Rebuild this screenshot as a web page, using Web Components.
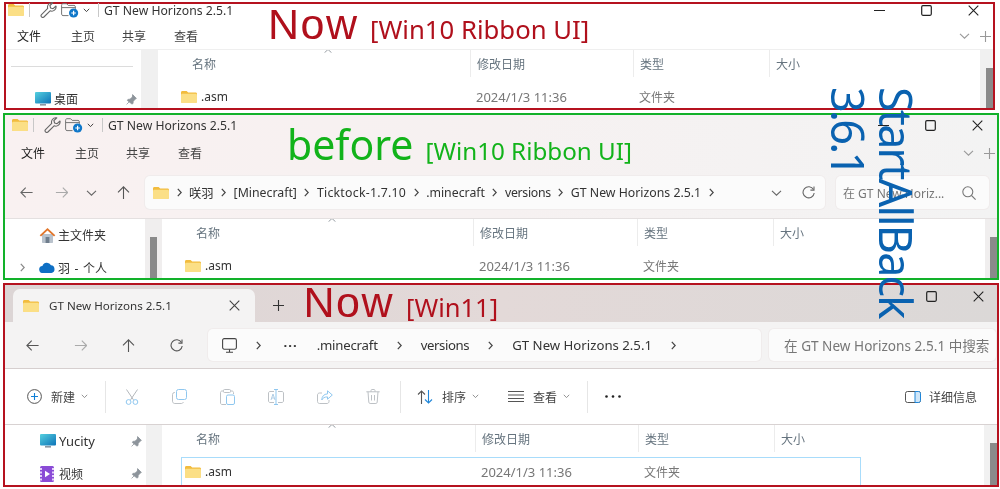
<!DOCTYPE html>
<html lang="zh">
<head>
<meta charset="utf-8">
<title>GT New Horizons 2.5.1</title>
<style>
  html, body { margin: 0; background: #fff; }
  body {
    width: 1000px; height: 489px; overflow: hidden; position: relative;
    font: 12px "Noto Sans", "Noto Sans CJK SC", sans-serif; color: #333;
    filter: blur(.3px);
  }
</style>
</head>
<body>

<win-frame color="#b5121f" style="margin:2px 0 0 4px;width:991px;height:108px">
  <title-bar style="--h:12px;--qa-left:2px"></title-bar>
  <ribbon-tabs style="--pt:7px;--h:26px;--left:11px;--after:0px;--rule:#efefef"></ribbon-tabs>
  <file-pane side="152" cols="312px 163px 136px 91px" thumb="18" track="13" style="--band:17px;--line:#f0f0f0">
    <nav-rule slot="side"></nav-rule>
    <nav-item slot="side" icon="desktop" pin style="--pad:29px">桌面</nav-item>
    <list-row name=".asm" date="2024/1/3 11:36" type="文件夹"></list-row>
  </file-pane>
  <note-label color="#b0101c" style="left:262px;top:-1.4px;--big:43px;--big-font:'Liberation Sans';--big-ls:1.5px;--small:25.7px;--gap:11.5px" big="Now" small="[Win10 Ribbon UI]"></note-label>
</win-frame>

<win-frame color="#12b12a" style="margin:3px 0 0 3px;width:996px;height:167px;--bg:linear-gradient(90deg,#f9f1f1,#f6f1f1 50%,#f3f3f3)">
  <title-bar style="--h:20px;--qa-left:7px"></title-bar>
  <ribbon-tabs style="--pt:4px;--h:28px;--left:16px;--after:4px"></ribbon-tabs>
  <addr-row cols="35px 31px 31px 28px" style="--left:15px;--pt:4px;--pb:9px;--box-h:33px;--seg:7.5px;--search-w:153px;--box-gap:11px;--right:8px;--fs:12.3px;--box-pad:8px;--search-right:13px">
    <win-icon slot="nav" name="back" style="color:#666"></win-icon>
    <win-icon slot="nav" name="back" flip style="color:#aaa"></win-icon>
    <win-icon slot="nav" name="chev" style="color:#666"></win-icon>
    <win-icon slot="nav" name="up" style="color:#555"></win-icon>
    <win-icon slot="start" name="folder"></win-icon>
    <path-seg first></path-seg>
    <path-seg>咲羽</path-seg>
    <path-seg>[Minecraft]</path-seg>
    <path-seg style="letter-spacing:.25px">Ticktock-1.7.10</path-seg>
    <path-seg>.minecraft</path-seg>
    <path-seg style="letter-spacing:-.3px">versions</path-seg>
    <path-seg>GT New Horizons 2.5.1</path-seg>
    <win-icon slot="end" name="chev" style="color:#666;margin-right:13px"></win-icon>
    <win-icon slot="end" name="refresh" style="color:#666;margin-right:2px"></win-icon>
    <span slot="search" style="font-size:12px">在 GT New Horiz...</span>
    <win-icon slot="search-icon" name="search" style="color:#777"></win-icon>
  </addr-row>
  <file-pane side="157" cols="311px 164px 136px 91px" thumb="18" track="12" style="--band:17px;--line:#f0eeee">
    <scroll-thumb slot="side-thumb"></scroll-thumb>
    <nav-item slot="side" icon="home" style="--pad:34px">主文件夹</nav-item>
    <nav-item slot="side" icon="cloud" arrow style="--pad:15px;word-spacing:1.5px">羽 - 个人</nav-item>
    <list-row name=".asm" date="2024/1/3 11:36" type="文件夹"></list-row>
  </file-pane>
  <note-label color="#12b31a" style="left:282px;top:9px;--big:41px;--small:24.2px;--gap:12px" big="before" small="[Win10 Ribbon UI]"></note-label>
</win-frame>

<win-frame color="#b5121f" style="margin:3px 0 0 3px;width:996px;height:204px">
  <tab-strip></tab-strip>
  <addr-row cols="48px 48px 48px 38px" style="--left:21px;--pt:7px;--pb:7px;--box-h:32px;--seg:19px;--search-w:227px;--box-gap:8px;--right:1px;--bg:#f4f3f3;--border:#d6cfcf;--fs:13.2px;--box-pad:14px;--search-left:15px">
    <win-icon slot="nav" name="back" style="color:#555"></win-icon>
    <win-icon slot="nav" name="back" flip style="color:#aaa"></win-icon>
    <win-icon slot="nav" name="up" style="color:#555"></win-icon>
    <win-icon slot="nav" name="refresh" style="color:#555"></win-icon>
    <win-icon slot="start" name="monitor" style="color:#444"></win-icon>
    <path-seg first></path-seg>
    <path-seg nochev style="letter-spacing:1px;font-weight:700;margin-left:3.5px">···</path-seg>
    <path-seg style="letter-spacing:-.2px">.minecraft</path-seg>
    <path-seg style="letter-spacing:-.4px">versions</path-seg>
    <path-seg>GT New Horizons 2.5.1</path-seg>
    <span slot="search" style="font-size:13.6px">在 GT New Horizons 2.5.1 中搜索</span>
  </addr-row>
  <cmd-bar></cmd-bar>
  <file-pane side="157" cols="313px 163px 136px 90px" thumb="18" track="13" style="--band:16px;--line:#f1f1f1">
    <nav-item slot="side" icon="desktop" pin style="--pad:35px;font-size:13px">Yucity</nav-item>
    <nav-item slot="side" icon="video" pin style="--pad:35px">视频</nav-item>
    <list-row name=".asm" date="2024/1/3 11:36" type="文件夹" selected></list-row>
  </file-pane>
  <note-label color="#b0101c" style="left:298.5px;top:-4.5px;--big:43px;--big-font:'Liberation Sans';--big-ls:1.5px;--small:25.5px;--gap:12px" big="Now" small="[Win11]"></note-label>
</win-frame>

<side-note style="left:824px;top:87px">StartAllBack<br><span style="letter-spacing:-2.8px">3.6.1</span></side-note>

<script>
// every icon of the page, all on their own small viewBox
const ICONS = {
  folder: [16, 12, '<path d="M0 1.4C0 .6.6 0 1.4 0h4.2l1.6 1.6h7.4c.8 0 1.4.6 1.4 1.4v7.6c0 .8-.6 1.4-1.4 1.4H1.4C.6 12 0 11.4 0 10.6z" fill="#f2bc3e"/><path d="M0 4.2c0-.8.6-1.4 1.4-1.4h13.2c.8 0 1.4.6 1.4 1.4v6.4c0 .8-.6 1.4-1.4 1.4H1.4C.6 12 0 11.4 0 10.6z" fill="#fbdf86"/>'],
  wrench: [17, 16, '<path d="M12 .8a4.3 4.3 0 0 0-4.3 5.6L1.5 12.6a1.7 1.7 0 0 0 2.4 2.4l6.2-6.2A4.3 4.3 0 0 0 16 4l-2.9 2.7-2.5-.7-.7-2.5L12.8.8z" fill="none" stroke="#666" stroke-width="1.1" stroke-linejoin="round"/>'],
  folderplus: [18, 15, '<path d="M.6 2.2C.6 1.3 1.2.7 2 .7h3.6l1.6 1.7H13c.8 0 1.4.6 1.4 1.4v2M.6 2.2v9c0 .8.6 1.4 1.4 1.4h5.5M.6 4.6h13.6" fill="none" stroke="#777" stroke-width="1"/><circle cx="12.6" cy="10" r="4.6" fill="#0f77c9"/><path d="M12.6 7.7v4.6M10.3 10h4.6" stroke="#fff" stroke-width="1.2"/>'],
  chev: [11, 6, '<path d="M1 .8l4.5 4.4L10 .8" fill="none" stroke="currentColor" stroke-width="1.1"/>'],
  chevs: [7, 5, '<path d="M.8.8l2.7 2.8L6.2.8" fill="none" stroke="currentColor" stroke-width=".9"/>'],
  chevr: [5, 9, '<path d="M.8.8l3.4 3.7L.8 8.2" fill="none" stroke="currentColor" stroke-width="1.2"/>'],
  min: [11, 1, '<path d="M0 .5h11" stroke="currentColor" stroke-width="1"/>'],
  max: [11, 11, '<rect x=".7" y=".7" width="9.6" height="9.6" rx="1.2" fill="none" stroke="currentColor" stroke-width="1.2"/>'],
  close: [11, 11, '<path d="M.7.7l9.6 9.6M10.3.7L.7 10.3" stroke="currentColor" stroke-width="1.1"/>'],
  plus: [11, 11, '<path d="M5.5 0v11M0 5.5h11" stroke="currentColor" stroke-width="1.1"/>'],
  back: [13, 11, '<path d="M12.6 5.5H1M5.7.7L.9 5.5l4.8 4.8" fill="none" stroke="currentColor" stroke-width="1.1"/>'],
  up: [13, 13, '<path d="M6.5 13V1M1 6.4L6.5.9 12 6.4" fill="none" stroke="currentColor" stroke-width="1.1"/>'],
  refresh: [13, 13, '<path d="M11.5 3.5A5.6 5.6 0 1 0 12.2 7" fill="none" stroke="currentColor" stroke-width="1.1"/><path d="M12 .5v3.6H8.4" fill="none" stroke="currentColor" stroke-width="1.1"/>'],
  search: [14, 14, '<circle cx="5.8" cy="5.8" r="5" fill="none" stroke="currentColor" stroke-width="1.1"/><path d="M9.4 9.4l4.2 4.2" stroke="currentColor" stroke-width="1.2"/>'],
  pin: [11, 11, '<path d="M6.6.6l3.8 3.8-1.1.6-2.1 2.4-.2 2.2-1.1.4L1.4 6.5l.5-1.1L4 5.2l2.4-2.1zM3.1 7.9L.6 10.4" fill="#8d949b" stroke="#8d949b" stroke-width=".8"/>'],
  desktop: [16, 14, '<defs><linearGradient id="d" x1="0" y1="0" x2="1" y2="1"><stop offset="0" stop-color="#55d0df"/><stop offset="1" stop-color="#0d73b8"/></linearGradient></defs><rect width="16" height="11.5" rx="1" fill="url(#d)"/><rect x="5" y="12" width="6" height="1.6" fill="#8a97a3"/>'],
  home: [17, 16, '<path d="M3 7h11v8c0 .6-.4 1-1 1H4c-.6 0-1-.4-1-1z" fill="#b9c2cc"/><rect x="6.6" y="10" width="3.8" height="6" fill="#6f7d8c"/><path d="M8.5 1L.7 8.2l1.3 1.2 6.5-6 6.5 6 1.3-1.2z" fill="#e2762b"/>'],
  cloud: [16, 11, '<path d="M4 11a3.5 3.5 0 0 1-.6-7A4.6 4.6 0 0 1 12 3.3 3.9 3.9 0 0 1 12.4 11z" fill="#0e6fc4"/>'],
  video: [14, 16, '<rect width="14" height="16" rx="1.5" fill="#8a4bd6"/><path d="M0 2h2v2H0zm0 3.5h2v2H0zm0 3.5h2v2H0zm0 3.5h2v2H0zM12 2h2v2h-2zm0 3.5h2v2h-2zm0 3.5h2v2h-2zm0 3.5h2v2h-2z" fill="#e6d2fb"/><path d="M5 4.8l5 3.2-5 3.2z" fill="#fff"/>'],
  monitor: [15, 15, '<rect x=".6" y=".6" width="13.8" height="10.6" rx="1.6" fill="none" stroke="currentColor" stroke-width="1.1"/><path d="M7.5 11.2v3M4 14.3h7" stroke="currentColor" stroke-width="1.1"/>'],
  pluscircle: [15, 15, '<circle cx="7.5" cy="7.5" r="6.9" fill="none" stroke="#555" stroke-width="1"/><path d="M7.5 4v7M4 7.5h7" stroke="#0f7fd6" stroke-width="1.1"/>'],
  cut: [14, 16, '<path d="M1.5.5l7 10.4M12.5.5l-7 10.4" stroke="#b4b8bc" stroke-width="1" fill="none"/><circle cx="3.6" cy="13" r="2.4" fill="none" stroke="#8fc7ef" stroke-width="1"/><circle cx="10.4" cy="13" r="2.4" fill="none" stroke="#8fc7ef" stroke-width="1"/>'],
  copy: [15, 15, '<rect x="4.5" y=".5" width="10" height="10" rx="2" fill="none" stroke="#8fc7ef" stroke-width="1"/><path d="M2.8 3.4A2.3 2.3 0 0 0 .5 5.7v6.5c0 1.3 1 2.3 2.3 2.3h6.5c1 0 1.8-.6 2.1-1.5" fill="none" stroke="#bdc1c5" stroke-width="1"/>'],
  paste: [15, 16, '<path d="M3.5 2H2C1.2 2 .5 2.7 .5 3.5V14c0 .8.7 1.5 1.5 1.5h4M10.5 2H12c.8 0 1.5.7 1.5 1.5V5" fill="none" stroke="#bdc1c5" stroke-width="1"/><rect x="3.5" y=".5" width="7" height="3" rx="1" fill="none" stroke="#bdc1c5" stroke-width="1"/><rect x="6.5" y="6" width="8" height="9.5" rx="1.5" fill="none" stroke="#8fc7ef" stroke-width="1"/>'],
  rename: [16, 16, '<path d="M6 2.5H2C1.2 2.5 .5 3.2 .5 4v8c0 .8.7 1.5 1.5 1.5h4M10 2.5h4c.8 0 1.5.7 1.5 1.5v8c0 .8-.7 1.5-1.5 1.5h-4" fill="none" stroke="#bdc1c5" stroke-width="1"/><path d="M8 .5v15M6 .5h4M6 15.5h4" stroke="#8fc7ef" stroke-width="1" fill="none"/><path d="M3 11l2-6 2 6M3.7 9h2.6" stroke="#a9c9e3" stroke-width=".9" fill="none"/>'],
  share: [16, 14, '<path d="M5 3H2.5C1.4 3 .5 3.9 .5 5v6.5c0 1.1.9 2 2 2H10c1.1 0 2-.9 2-2V10" fill="none" stroke="#bdc1c5" stroke-width="1"/><path d="M10.5.8L15.3 5l-4.8 4.2V6.9C7.5 6.9 5.8 8 4.8 10c0-3.600 2.200-6 5.700-6.100z" fill="none" stroke="#8fc7ef" stroke-width="1"/>'],
  trash: [14, 15, '<path d="M.3 2.8h13.4M5 2.8V1.5C5 .9 5.400.5 6 .5h2c.6 0 1 .4 1 1v1.300M2 2.800l.8 10.400c.1.7.6 1.300 1.300 1.300h5.800c.7 0 1.200-.6 1.300-1.300L12 2.800M5.500 6v5.500M8.500 6v5.500" fill="none" stroke="#bdc1c5" stroke-width="1"/>'],
  sort: [16, 14, '<path d="M4.5 14V1M1 4.5L4.5 1 8 4.5" fill="none" stroke="#555" stroke-width="1.1"/><path d="M11.5 0v13M8 9.5l3.500 3.500L15 9.500" fill="none" stroke="#1f86d9" stroke-width="1.1"/>'],
  lines: [16, 11, '<path d="M0 .5h16M0 4h16M0 7.5h16M0 10.5h16" stroke="#555" stroke-width="1"/>'],
  details: [16, 12, '<rect x=".5" y=".5" width="15" height="11" rx="2" fill="none" stroke="#555" stroke-width="1"/><path d="M10 .5h3.5c1.1 0 2 .9 2 2v7c0 1.1-.9 2-2 2H10z" fill="#cfe6f8" stroke="#1f86d9" stroke-width="1"/>'],
  dots: [16, 3, '<circle cx="1.5" cy="1.5" r="1.3" fill="#222"/><circle cx="8" cy="1.5" r="1.3" fill="#222"/><circle cx="14.5" cy="1.5" r="1.3" fill="#222"/>'],
  caret: [8, 4, '<path d="M.5 3.7L4 .5l3.5 3.2" fill="none" stroke="#9aa0a6" stroke-width="1"/>']
};

class WinIcon extends HTMLElement {
  connectedCallback() {
    const [w, h, body] = ICONS[this.getAttribute('name')];
    const flip = this.hasAttribute('flip') ? 'style="transform:scaleX(-1);transform-origin:center;transform-box:fill-box"' : '';
    this.attachShadow({ mode: 'open' }).innerHTML = `
      <style>:host{display:inline-flex;flex:none;align-items:center} svg{display:block}</style>
      <svg width="${w}" height="${h}" viewBox="0 0 ${w} ${h}"><g ${flip}>${body}</g></svg>`;
  }
}

class WinFrame extends HTMLElement {
  constructor() {
    super();
    this.attachShadow({ mode: 'open' }).innerHTML = `
      <style>
        :host{display:flex;flex-direction:column;box-sizing:border-box;position:relative;
          border:2px solid ${this.getAttribute('color')};background:var(--bg,#fff)}
      </style>
      <slot></slot>`;
  }
}

class TitleBar extends HTMLElement {
  constructor() {
    super();
    this.attachShadow({ mode: 'open' }).innerHTML = `
      <style>
        :host{display:flex;align-items:center;height:var(--h);padding-left:var(--qa-left);flex:none}
        .sep{width:1px;height:14px;background:#c8c8c8}
        .t{font-size:12.2px;color:#333;white-space:nowrap;margin-left:5px}
        .w{margin-left:auto;display:flex;align-items:center;gap:36px;padding-right:14px;color:#222}
      </style>
      <win-icon name="folder"></win-icon>
      <span class="sep" style="margin:0 10px 0 5px"></span>
      <win-icon name="wrench" style="margin-right:4px"></win-icon>
      <win-icon name="folderplus"></win-icon>
      <win-icon name="chevs" style="margin:0 8px 0 4px;color:#333"></win-icon>
      <span class="sep"></span>
      <span class="t">GT New Horizons 2.5.1</span>
      <div class="w">
        <win-icon name="min"></win-icon>
        <win-icon name="max"></win-icon>
        <win-icon name="close"></win-icon>
      </div>`;
  }
}

class RibbonTabs extends HTMLElement {
  constructor() {
    super();
    this.attachShadow({ mode: 'open' }).innerHTML = `
      <style>
        :host{display:flex;align-items:center;flex:none;height:var(--h);
          padding:var(--pt) 2px var(--after,0) var(--left);font-size:12px;color:#444;
          border-bottom:1px solid var(--rule,transparent)}
        span{width:52px;white-space:nowrap}
        span:nth-of-type(1){width:54px;color:#222}
        span:nth-of-type(2){width:51px}
        .r{margin-left:auto;display:flex;align-items:center;gap:10px;color:#999}
      </style>
      <span>文件</span><span>主页</span><span>共享</span><span>查看</span>
      <div class="r"><win-icon name="chev"></win-icon><win-icon name="plus"></win-icon></div>`;
  }
}

class PathSeg extends HTMLElement {
  constructor() {
    super();
    const first = this.hasAttribute('first');
    const chev = this.hasAttribute('nochev') ? '' : '<win-icon name="chevr"></win-icon>';
    this.attachShadow({ mode: 'open' }).innerHTML = `
      <style>
        :host{display:flex;align-items:center;gap:${first ? '0' : 'var(--seg)'};white-space:nowrap;padding-left:${first ? '0' : 'var(--seg)'}}
        win-icon{color:#444}
      </style>
      <slot></slot>${chev}`;
  }
}

class AddrRow extends HTMLElement {
  constructor() {
    super();
    this.attachShadow({ mode: 'open' }).innerHTML = `
      <style>
        :host{display:flex;flex:none;align-items:stretch;height:var(--box-h);
          padding:var(--pt) var(--right) var(--pb) var(--left);background:var(--bg,transparent);
          border-bottom:1px solid var(--border,#e4e0e0);font-size:var(--fs);color:#333}
        .nav{display:grid;grid-template-columns:${this.getAttribute('cols')};align-items:center;flex:none}
        .box{flex:1;min-width:0;display:flex;align-items:center;background:#fbfbfb;border-radius:5px;
          padding:0 8px 0 var(--box-pad);gap:var(--seg);box-shadow:0 0 0 1px #f0ecec;margin-right:var(--box-gap)}
        .crumbs{display:flex;align-items:center;flex:1;min-width:0}
        .search{flex:none;width:var(--search-w);box-sizing:border-box;display:flex;align-items:center;
          justify-content:space-between;background:#fbfbfb;border-radius:5px;
          padding:0 var(--search-right,0) 0 var(--search-left,7px);color:#777;white-space:nowrap;
          box-shadow:0 0 0 1px #f0ecec}
      </style>
      <div class="nav"><slot name="nav"></slot></div>
      <div class="box">
        <slot name="start"></slot>
        <div class="crumbs"><slot></slot></div>
        <slot name="end"></slot>
      </div>
      <div class="search"><slot name="search"></slot><slot name="search-icon"></slot></div>`;
  }
}

class TabStrip extends HTMLElement {
  constructor() {
    super();
    this.attachShadow({ mode: 'open' }).innerHTML = `
      <style>
        :host{display:flex;flex:none;align-items:stretch;height:33px;padding:4px 0 0 8px;
          background:linear-gradient(90deg,#dcd5d5,#e3d9d8 50%,#dbd8d7)}
        .tab{width:242px;box-sizing:border-box;background:#f4f3f3;border-radius:7px 7px 0 0;display:flex;align-items:center;
          padding:0 15px 0 10px;font-size:11.6px;color:#333;white-space:nowrap}
        .t{margin-left:10px;flex:1}
        .plus{align-self:center;margin-left:18px;color:#333}
        .w{margin-left:auto;align-self:center;display:flex;gap:36px;padding:0 13px 18px 0;color:#222}
      </style>
      <div class="tab">
        <win-icon name="folder"></win-icon>
        <span class="t">GT New Horizons 2.5.1</span>
        <win-icon name="close" style="color:#444"></win-icon>
      </div>
      <win-icon class="plus" name="plus"></win-icon>
      <div class="w"><win-icon name="max"></win-icon><win-icon name="close"></win-icon></div>`;
  }
}

class CmdBar extends HTMLElement {
  constructor() {
    super();
    this.attachShadow({ mode: 'open' }).innerHTML = `
      <style>
        :host{display:flex;flex:none;align-items:center;height:55px;padding:0 20px 0 22px;font-size:12px;color:#444;border-bottom:1px solid #d8d2d2}
        .sep{width:1px;height:32px;background:#e6e6e6;margin:0 17px}
        .i{display:flex;gap:33px;align-items:center;margin:0 3px 0 2px}
        .b{display:flex;align-items:center;gap:9px;white-space:nowrap}
        .c{color:#888;margin-left:-3px}
      </style>
      <div class="b"><win-icon name="pluscircle"></win-icon>新建<win-icon class="c" name="chevs"></win-icon></div>
      <span class="sep"></span>
      <div class="i">
        <win-icon name="cut"></win-icon><win-icon name="copy"></win-icon><win-icon name="paste"></win-icon>
        <win-icon name="rename"></win-icon><win-icon name="share"></win-icon><win-icon name="trash"></win-icon>
      </div>
      <span class="sep" style="margin-right:16px"></span>
      <div class="b"><win-icon name="sort"></win-icon>排序<win-icon class="c" name="chevs"></win-icon></div>
      <div class="b" style="margin-left:29px"><win-icon name="lines"></win-icon>查看<win-icon class="c" name="chevs"></win-icon></div>
      <span class="sep"></span>
      <win-icon name="dots"></win-icon>
      <div class="b" style="margin-left:auto;gap:8px"><win-icon name="details"></win-icon>详细信息</div>`;
  }
}

class FilePane extends HTMLElement {
  constructor() {
    super();
    const a = n => this.getAttribute(n);
    const cols = a('cols').split(' ');
    const heads = ['名称', '修改日期', '类型', '大小'];
    this.attachShadow({ mode: 'open' }).innerHTML = `
      <style>
        :host{display:grid;grid-template-columns:${a('side')}px 1fr ${a('track')}px;flex:1;min-height:0;overflow:hidden;background:#fff;
          --cols:${a('cols')};--first:${parseInt(cols[0]) - 14}px;--second:${cols[1]}}
        .side{display:grid;grid-template-columns:1fr var(--band);min-height:0;overflow:hidden}
        .nav{min-width:0}
        .band{background:var(--line);display:flex;justify-content:center;padding-top:${a('thumb')}px}
        .main{min-width:0;overflow:hidden;position:relative}
        .head{display:grid;grid-template-columns:var(--cols);height:27px;font-size:12px;color:#66747f;position:relative}
        .head span{display:flex;align-items:center;padding-left:6px;border-left:1px solid #ececec;white-space:nowrap}
        .head span:first-child{padding-left:34px;border:0}
        .head win-icon{position:absolute;left:166px;top:-1px}
        .track{background:var(--line);display:flex;justify-content:flex-end;padding-top:${a('thumb')}px}
      </style>
      <div class="side">
        <div class="nav"><slot name="side"></slot></div>
        <div class="band"><slot name="side-thumb"></slot></div>
      </div>
      <div class="main">
        <div class="head">${heads.map(h => `<span>${h}</span>`).join('')}<win-icon name="caret"></win-icon></div>
        <slot></slot>
      </div>
      <div class="track"><scroll-thumb></scroll-thumb></div>`;
  }
}

class ScrollThumb extends HTMLElement {
  constructor() {
    super();
    this.attachShadow({ mode: 'open' }).innerHTML = `<style>:host{display:block;width:7px;height:100px;background:#8a8a8a}</style>`;
  }
}

class NavRule extends HTMLElement {
  constructor() {
    super();
    this.attachShadow({ mode: 'open' }).innerHTML = `<style>:host{display:block;height:1px;width:122px;margin:16px 0 16px 5px;background:#dcdcdc}</style>`;
  }
}

class NavItem extends HTMLElement {
  constructor() {
    super();
    const icon = this.getAttribute('icon');
    this.attachShadow({ mode: 'open' }).innerHTML = `
      <style>
        :host{display:flex;align-items:center;height:32.5px;padding:0 4px 0 var(--pad);color:#333;white-space:nowrap}
        .ic{width:19px;display:flex;justify-content:flex-start}
        .ar{width:19px;color:#888}
        .pin{margin-left:auto}
      </style>
      ${this.hasAttribute('arrow') ? '<div class="ar"><win-icon name="chevr"></win-icon></div>' : ''}
      <div class="ic"><win-icon name="${icon}"></win-icon></div>
      <slot></slot>
      ${this.hasAttribute('pin') ? '<win-icon class="pin" name="pin"></win-icon>' : ''}`;
  }
}

class ListRow extends HTMLElement {
  constructor() {
    super();
    const a = n => this.getAttribute(n);
    const sel = this.hasAttribute('selected');
    this.attachShadow({ mode: 'open' }).innerHTML = `
      <style>
        :host{display:grid;grid-template-columns:var(--first) var(--second) auto;justify-content:start;box-sizing:border-box;
          width:680px;height:29px;margin:5px 0 0 19px;align-items:center;font-size:12px;color:#777;white-space:nowrap;
          border:1px solid ${sel ? '#a8dcfb' : 'transparent'}}
        .n{display:flex;align-items:center;gap:4px;padding-left:3px;color:#333}
        .d{font-size:13px}
      </style>
      <div class="n"><win-icon name="folder"></win-icon>${a('name')}</div>
      <div class="d">${a('date')}</div>
      <div>${a('type')}</div>`;
  }
}

class NoteLabel extends HTMLElement {
  constructor() {
    super();
    const a = n => this.getAttribute(n);
    this.attachShadow({ mode: 'open' }).innerHTML = `
      <style>
        :host{position:absolute;display:flex;align-items:baseline;gap:var(--gap);color:${a('color')};white-space:nowrap;line-height:1}
        b{font-weight:400;font-size:var(--big);font-family:var(--big-font,inherit),"Noto Sans",sans-serif;letter-spacing:var(--big-ls,0)}
        i{font-style:normal;font-size:var(--small)}
      </style>
      <b>${a('big')}</b><i>${a('small')}</i>`;
  }
}

class SideNote extends HTMLElement {
  constructor() {
    super();
    this.attachShadow({ mode: 'open' }).innerHTML = `
      <style>:host{position:absolute;writing-mode:vertical-rl;font-size:45px;letter-spacing:-1.9px;line-height:48px;color:#0a62b0;white-space:nowrap}</style>
      <slot></slot>`;
  }
}

customElements.define('win-icon', WinIcon);
customElements.define('win-frame', WinFrame);
customElements.define('title-bar', TitleBar);
customElements.define('ribbon-tabs', RibbonTabs);
customElements.define('path-seg', PathSeg);
customElements.define('addr-row', AddrRow);
customElements.define('tab-strip', TabStrip);
customElements.define('cmd-bar', CmdBar);
customElements.define('file-pane', FilePane);
customElements.define('scroll-thumb', ScrollThumb);
customElements.define('nav-rule', NavRule);
customElements.define('nav-item', NavItem);
customElements.define('list-row', ListRow);
customElements.define('note-label', NoteLabel);
customElements.define('side-note', SideNote);
</script>
</body>
</html>
